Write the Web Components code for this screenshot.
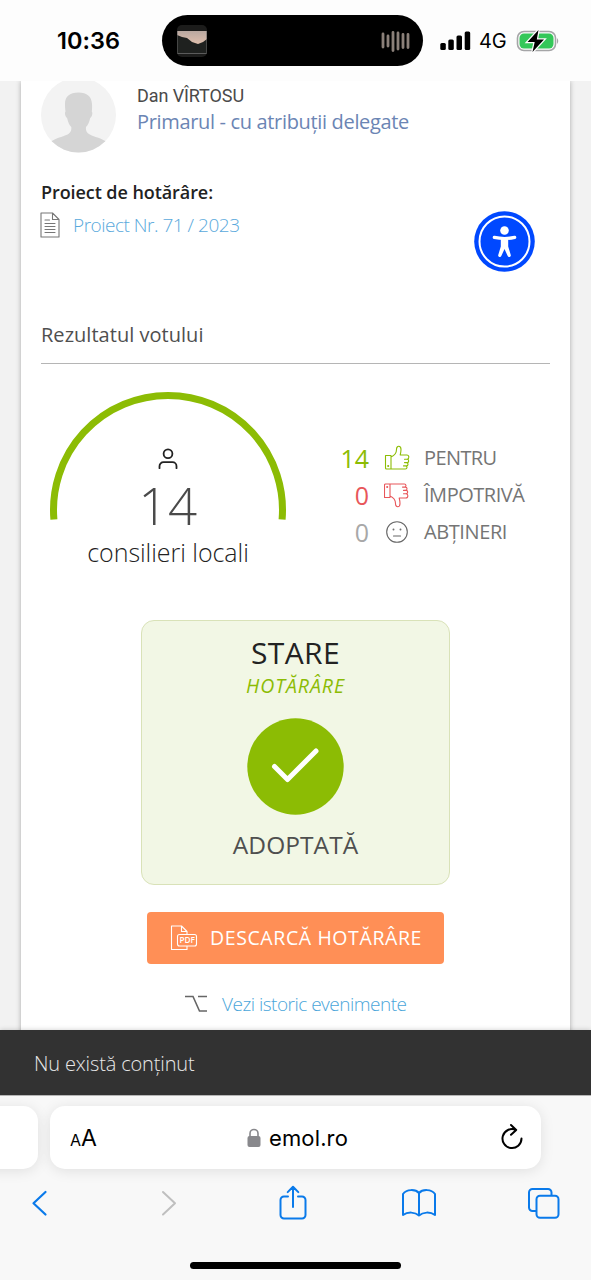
<!DOCTYPE html>
<html lang="ro">
<head>
<meta charset="UTF-8">
<title>emol.ro</title>
<style>
    html, body {
        margin: 0;
        padding: 0;
    }
    body {
        width: 591px;
        height: 1280px;
        overflow: hidden;
        display: flex;
        flex-direction: column;
        font-family: "Open Sans", "Noto Sans", sans-serif;
        background: #f8f8f8;
    }
</style>
</head>
<body>
<status-bar time="10:36" network="4G"></status-bar>
<page-view>
    <author-info name="Dan VÎRTOSU" role="Primarul - cu atribuții delegate"></author-info>
    <project-link label="Proiect de hotărâre:">Proiect Nr. 71 / 2023</project-link>
    <section-title>Rezultatul votului</section-title>
    <vote-result>
        <vote-gauge slot="gauge" count="14" label="consilieri locali"></vote-gauge>
        <vote-row type="up" count="14" width="72.5">PENTRU</vote-row>
        <vote-row type="down" count="0" width="100.5">ÎMPOTRIVĂ</vote-row>
        <vote-row type="neutral" count="0" width="83">ABȚINERI</vote-row>
    </vote-result>
    <state-card heading="STARE" kind="HOTĂRÂRE" state="ADOPTATĂ"></state-card>
    <download-button>DESCARCĂ HOTĂRÂRE</download-button>
    <history-link>Vezi istoric evenimente</history-link>
    <access-badge slot="overlay"></access-badge>
</page-view>
<snack-bar>Nu există conținut</snack-bar>
<browser-bar host="emol.ro"></browser-bar>

<script>
// one line of text, letter-spaced so that it takes the given width
class FitText extends HTMLElement {
    constructor() {
        super();
        this.attachShadow({ mode: 'open' });
        this.shadowRoot.innerHTML = `
            <style>
                :host { display: inline-block; white-space: nowrap; }
                span { display: inline-block; }
            </style>
            <span><slot></slot></span>
        `;
    }

    connectedCallback() {
        const width = parseFloat(this.getAttribute("width"));
        const span = this.shadowRoot.querySelector("span");
        const count = this.textContent.trim().length;
        if (!width || !count) return;
        const space = (width - span.getBoundingClientRect().width) / count;
        span.style.letterSpacing = space.toFixed(3) + "px";
    }
}

class StatusBar extends HTMLElement {
    constructor() {
        super();
        this.attachShadow({ mode: 'open' });
        this.shadowRoot.innerHTML = `
            <style>
                :host {
                    display: flex;
                    flex: none;
                    align-items: center;
                    box-sizing: border-box;
                    height: 81px;
                    padding-left: 57px;
                    background: #fdfdfd;
                    color: #000;
                    font-family: Inter, "Liberation Sans", sans-serif;
                }
                .time { width: 105px; font-size: 23.5px; font-weight: 600; }
                .island {
                    display: flex;
                    align-items: center;
                    justify-content: space-between;
                    box-sizing: border-box;
                    width: 261px;
                    height: 51px;
                    padding: 0 12px 0 14px;
                    border-radius: 26px;
                    background: #000;
                }
                .signal { margin-left: 17px; }
                .net { margin-left: 8px; width: 37px; font-size: 20px; }
                svg { display: block; }
            </style>
            <div class="time"><fit-text width="63">${this.getAttribute("time")}</fit-text></div>
            <div class="island">
                <svg width="32" height="34" viewBox="0 0 32 34">
                    <defs>
                        <clipPath id="c"><rect x="1" y="1" width="30" height="32" rx="5"/></clipPath>
                        <linearGradient id="g" x1="0" y1="0" x2="0" y2="1">
                            <stop offset="0" stop-color="#b9a8a0"/><stop offset="1" stop-color="#e2c0ad"/>
                        </linearGradient>
                    </defs>
                    <g clip-path="url(#c)">
                        <rect width="32" height="34" fill="#1c1c1b"/>
                        <rect x="1" y="7" width="30" height="14" fill="url(#g)"/>
                        <path d="M1 11l5 2 5 1 5 4 6 2 5-2 4-3v14H1z" fill="#1f211f"/>
                        <path d="M1 29.500h30" stroke="#777" stroke-width=".7"/>
                        <path d="M1.300 7v22M30.700 7v22" stroke="#666" stroke-width=".7"/>
                    </g>
                </svg>
                <svg width="32" height="22" viewBox="0 0 32 22" stroke="#8b8079" stroke-width="2.800" stroke-linecap="round">
                    <path d="M4 4v13M9 6v10M14 2.500v18M19 3v16M24 4.500v13M29 4.500v13"/>
                </svg>
            </div>
            <svg class="signal" width="31" height="20" viewBox="0 0 31 20">
                <rect x="0.300" y="12" width="5.500" height="7" rx="1.500"/>
                <rect x="8.300" y="8.500" width="5.500" height="10.500" rx="1.500"/>
                <rect x="16.500" y="4.500" width="5.500" height="14.500" rx="1.500"/>
                <rect x="24.700" y="0.500" width="5.500" height="18.500" rx="1.500"/>
            </svg>
            <div class="net"><fit-text width="27.5">${this.getAttribute("network")}</fit-text></div>
            <svg width="44" height="22" viewBox="0 0 44 22">
                <rect x="1.500" y="1.500" width="38" height="19" rx="6.500" fill="none" stroke="#a5a5a7" stroke-width="1.600"/>
                <rect x="3.500" y="3.500" width="34" height="15" rx="4.500" fill="#34c759"/>
                <path d="M41 8q2.500 3 0 6z" fill="#a5a5a7"/>
                <path d="M22.500 0L11.500 12h7.200L16.500 22 28 9.600h-7.200z" fill="#000" stroke="#fdfdfd" stroke-width="2.500" paint-order="stroke"/>
            </svg>
        `;
    }
}

class PageView extends HTMLElement {
    constructor() {
        super();
        this.attachShadow({ mode: 'open' });
        this.shadowRoot.innerHTML = `
            <style>
                :host {
                    display: block;
                    flex: none;
                    position: relative;
                    height: 949px;
                    overflow: hidden;
                    background: #f2f2f2;
                }
                .card {
                    display: flow-root;
                    box-sizing: border-box;
                    height: 960px;
                    margin: 0 21px;
                    padding: 0 20px;
                    background: #fff;
                    box-shadow: 0 0 5px rgba(0, 0, 0, .3);
                }
            </style>
            <div class="card"><slot></slot></div>
            <slot name="overlay"></slot>
        `;
    }
}

class AuthorInfo extends HTMLElement {
    constructor() {
        super();
        this.attachShadow({ mode: 'open' });
        this.shadowRoot.innerHTML = `
            <style>
                :host { display: flex; height: 76px; margin-top: -4px; }
                svg { flex: none; margin: 0 21px 0 -1px; }
                .text { padding-top: 6px; line-height: 26px; }
                .name { height: 26px; font-family: Roboto, sans-serif; font-size: 18px; color: #4a4a4a; }
                .role { height: 26px; font-size: 20px; color: #6b85b4; }
            </style>
            <svg width="76" height="76" viewBox="0 0 76 76">
                <clipPath id="a"><circle cx="38.500" cy="38" r="37.500"/></clipPath>
                <g clip-path="url(#a)">
                    <rect width="76" height="76" fill="#f3f3f3"/>
                    <path d="M38.500 15.500c-9 0-13.500 4-13.500 11.500 0 3 .2 5.500.5 7.500-1.200 1-.2 5.500 1.600 6.500 1 4.500 2.300 7 4.200 9 .5 5-2 7-7.500 9C16.500 61.500 10.500 63.500 4.500 70v10h68V70c-6-6.500-12-8.500-19.500-11-5.300-2-7.500-4-7-9 1.900-2 3.200-4.500 4.200-9 1.800-1 2.800-5.500 1.600-6.500.3-2 .4-4.500.2-7.500-.4-7.500-5-11.500-13.500-11.500z" fill="#d5d5d5"/>
                </g>
            </svg>
            <div class="text">
                <div class="name"><fit-text width="107">${this.getAttribute("name")}</fit-text></div>
                <div class="role"><fit-text width="272">${this.getAttribute("role")}</fit-text></div>
            </div>
        `;
    }
}

class ProjectLink extends HTMLElement {
    constructor() {
        super();
        this.attachShadow({ mode: 'open' });
        this.shadowRoot.innerHTML = `
            <style>
                :host { display: block; padding-top: 26px; }
                .label { height: 27px; line-height: 27px; font-size: 18px; font-weight: 600; color: #222; }
                .link {
                    display: flex;
                    align-items: center;
                    height: 38px;
                    font-size: 19px;
                    font-weight: 300;
                    color: #5aa9dc;
                }
                svg { margin: 0 13px 0 -1px; }
            </style>
            <div class="label"><fit-text width="172">${this.getAttribute("label")}</fit-text></div>
            <div class="link">
                <svg width="20" height="26" viewBox="0 0 20 26" fill="none" stroke="#777" stroke-width="1.100" stroke-linejoin="round" stroke-linecap="round">
                    <path d="M1 1h11.500L19 7.500v17.500H1zM12.500 1v6.500H19M5 8h4.500M5 11.500h10M5 14.500h10M5 17.500h10M5 20.500h10"/>
                </svg>
                <fit-text width="166.5">${this.textContent}</fit-text>
            </div>
        `;
    }
}

class AccessBadge extends HTMLElement {
    constructor() {
        super();
        this.attachShadow({ mode: 'open' });
        this.shadowRoot.innerHTML = `
            <style>
                :host { display: block; position: absolute; left: 474px; top: 130px; }
                svg { display: block; }
            </style>
            <svg width="61" height="61" viewBox="0 0 61 61">
                <circle cx="30.500" cy="30.500" r="30.300" fill="#0048ff"/>
                <circle cx="30.500" cy="30.500" r="25" fill="none" stroke="#fff" stroke-width="2"/>
                <circle cx="30.500" cy="19.500" r="4.300" fill="#fff"/>
                <path d="M20.300 26.400c7 1.500 13.400 1.500 20.400 0" stroke="#fff" stroke-width="3.200" stroke-linecap="round" fill="none"/>
                <path d="M26.800 27h7.400v8.500l2.500 8.300a1.600 1.600 0 0 1-3 1.200L30.500 38 27.300 45a1.600 1.600 0 0 1-3-1.200l2.500-8.300z" fill="#fff"/>
            </svg>
        `;
    }
}

class SectionTitle extends HTMLElement {
    constructor() {
        super();
        this.attachShadow({ mode: 'open' });
        this.shadowRoot.innerHTML = `
            <style>
                :host {
                    display: block;
                    box-sizing: border-box;
                    height: 120px;
                    padding-top: 77px;
                    line-height: 28px;
                    font-size: 20px;
                    color: #4f4f4f;
                    border-bottom: 1px solid #b5b5b5;
                }
            </style>
            <fit-text width="162.5">${this.textContent}</fit-text>
        `;
    }
}

class VoteResult extends HTMLElement {
    constructor() {
        super();
        this.attachShadow({ mode: 'open' });
        this.shadowRoot.innerHTML = `
            <style>
                :host { display: flex; height: 256px; }
                .rows { padding-top: 75px; }
            </style>
            <slot name="gauge"></slot>
            <div class="rows"><slot></slot></div>
        `;
    }
}

class VoteGauge extends HTMLElement {
    constructor() {
        super();
        this.attachShadow({ mode: 'open' });
        this.shadowRoot.innerHTML = `
            <style>
                :host { display: grid; width: 254px; padding-top: 27px; }
                .arc, .text { grid-area: 1 / 1; }
                .text {
                    display: flex;
                    flex-direction: column;
                    align-items: center;
                    padding-top: 57px;
                }
                .count { height: 58px; line-height: 58px; margin-top: 6px; font-size: 51px; font-weight: 300; color: #4a4a4a; }
                .label { height: 34px; line-height: 34px; margin-top: 1px; font-size: 25px; font-weight: 300; color: #222; }
            </style>
            <svg class="arc" width="254" height="130" viewBox="0 0 254 130">
                <path d="M12.900 128.500A114.500 114.500 0 1 1 241.100 128.500" fill="none" stroke="#8cbc04" stroke-width="7"/>
            </svg>
            <div class="text">
                <svg width="20" height="22" viewBox="0 0 20 22" fill="none" stroke="#222" stroke-width="1.800" stroke-linecap="round">
                    <circle cx="10" cy="5.700" r="4.400"/>
                    <path d="M1.500 20.200v-2a4 4 0 0 1 4-4h9a4 4 0 0 1 4 4v2"/>
                </svg>
                <div class="count"><fit-text width="59">${this.getAttribute("count")}</fit-text></div>
                <div class="label"><fit-text width="161.5">${this.getAttribute("label")}</fit-text></div>
            </div>
        `;
    }
}

const thumb = `
    <path d="M1.500 10.500h5.500v13.500H2.500a1 1 0 0 1-1-1zM7 12c3.500-1.500 5.500-4 5.500-7.500C12.500.2 17 .2 17 4.500c0 2-.3 3.500-.8 5.500h6.500c2.800 0 2.800 4 .3 4.200M20.500 14.200H23c2.300 0 2.300 3.400 0 3.400M20.500 17.600h1.800c2.300 0 2.300 3.300 0 3.300M19.500 20.900h2c2 0 2 3.100-.2 3.100H7"/>
    <circle cx="4.200" cy="21" r=".5"/>`;

const voteTypes = {
    up: { color: "#8cbc04", icon: thumb },
    down: { color: "#e8565a", icon: `<g transform="matrix(1 0 0 -1 -1 26)">${thumb}</g>` },
    neutral: {
        color: "#a8a8a8",
        stroke: "#666",
        icon: `<circle cx="13" cy="13" r="10.300"/><path d="M9.500 17h7"/><circle cx="9.500" cy="10.500" r=".4"/><circle cx="16.500" cy="10.500" r=".4"/>`
    }
};

class VoteRow extends HTMLElement {
    constructor() {
        super();
        this.attachShadow({ mode: 'open' });
        const type = voteTypes[this.getAttribute("type")];
        this.shadowRoot.innerHTML = `
            <style>
                :host { display: flex; align-items: center; height: 37px; }
                .count { width: 74px; text-align: right; font-size: 25px; color: ${type.color}; }
                svg { flex: none; margin: 0 14px 0 15px; }
                .label { font-size: 20px; color: #757575; }
            </style>
            <div class="count">${this.getAttribute("count")}</div>
            <svg width="26" height="26" viewBox="0 0 26 26" fill="none" stroke="${type.stroke || type.color}" stroke-width="1.100" stroke-linecap="round" stroke-linejoin="round">${type.icon}</svg>
            <div class="label"><fit-text width="${this.getAttribute("width")}">${this.textContent}</fit-text></div>
        `;
    }
}

class StateCard extends HTMLElement {
    constructor() {
        super();
        this.attachShadow({ mode: 'open' });
        this.shadowRoot.innerHTML = `
            <style>
                :host {
                    display: flex;
                    flex-direction: column;
                    align-items: center;
                    box-sizing: border-box;
                    width: 309px;
                    height: 265px;
                    margin: 0 auto;
                    padding-top: 12px;
                    border: 1px solid #d9e2b8;
                    border-radius: 13px;
                    background: #f2f7e5;
                }
                .heading { height: 40px; line-height: 40px; font-size: 30px; color: #222; }
                .kind { height: 25px; line-height: 25px; font-size: 19.500px; font-style: italic; color: #8cbc04; }
                svg { margin-top: 20px; }
                .state { height: 34px; line-height: 34px; margin-top: 13px; font-size: 24.500px; color: #4f4f4f; }
            </style>
            <div class="heading"><fit-text width="89">${this.getAttribute("heading")}</fit-text></div>
            <div class="kind"><fit-text width="99">${this.getAttribute("kind")}</fit-text></div>
            <svg width="97" height="97" viewBox="0 0 97 97">
                <circle cx="48.500" cy="48.500" r="48.200" fill="#8cbc04"/>
                <path d="M27.500 48.500L40.500 61.500 69 33" fill="none" stroke="#fff" stroke-width="5" stroke-linecap="round" stroke-linejoin="round"/>
            </svg>
            <div class="state"><fit-text width="125.5">${this.getAttribute("state")}</fit-text></div>
        `;
    }
}

class DownloadButton extends HTMLElement {
    constructor() {
        super();
        this.attachShadow({ mode: 'open' });
        this.shadowRoot.innerHTML = `
            <style>
                :host {
                    display: flex;
                    align-items: center;
                    box-sizing: border-box;
                    width: 297px;
                    height: 52px;
                    margin: 27px auto 0;
                    padding: 0 0 2px 23px;
                    border-radius: 4px;
                    background: #ff8f56;
                    color: #fff;
                    font-size: 19.500px;
                }
                svg { margin: 1px 12px 0 0; }
                text { font: 600 8.500px "Open Sans", sans-serif; }
            </style>
            <svg width="28" height="26" viewBox="0 0 28 26" fill="none" stroke="#fff" stroke-width="1.100" stroke-linejoin="round">
                <path d="M17 9V6.500L11.500 1H1.500v23.500H17V21M11.500 1v5.500H17"/>
                <rect x="7.500" y="9.500" width="19" height="11.500" rx="2"/>
                <text x="9.400" y="18.300" textLength="15.500" lengthAdjust="spacingAndGlyphs" fill="#fff" stroke="none">PDF</text>
            </svg>
            <fit-text width="212">${this.textContent}</fit-text>
        `;
    }
}

class HistoryLink extends HTMLElement {
    constructor() {
        super();
        this.attachShadow({ mode: 'open' });
        this.shadowRoot.innerHTML = `
            <style>
                :host {
                    display: flex;
                    align-items: center;
                    height: 30px;
                    margin-top: 25px;
                    padding-left: 143px;
                    font-size: 19px;
                    font-weight: 300;
                    color: #4aa6da;
                }
                svg { margin-right: 14px; }
            </style>
            <svg width="24" height="18" viewBox="0 0 24 18" fill="none" stroke="#666" stroke-width="1.600">
                <path d="M1 1.500h8l6.500 14.500H23M14 1.500h9"/>
            </svg>
            <fit-text width="184.5">${this.textContent}</fit-text>
        `;
    }
}

class SnackBar extends HTMLElement {
    constructor() {
        super();
        this.attachShadow({ mode: 'open' });
        this.shadowRoot.innerHTML = `
            <style>
                :host {
                    display: flex;
                    flex: none;
                    align-items: center;
                    box-sizing: border-box;
                    height: 65px;
                    padding: 2px 0 0 34px;
                    background: #323232;
                    color: #e8e8e8;
                    font-size: 20px;
                    font-weight: 300;
                    z-index: 1;
                    box-shadow: 0 0 5px rgba(0, 0, 0, .2);
                }
            </style>
            <fit-text width="160.5">${this.textContent}</fit-text>
        `;
    }
}

class BrowserBar extends HTMLElement {
    constructor() {
        super();
        this.attachShadow({ mode: 'open' });
        this.shadowRoot.innerHTML = `
            <style>
                :host {
                    display: flex;
                    flex-direction: column;
                    flex: 1;
                    box-sizing: border-box;
                    border-top: 1px solid #b5b5b5;
                    background: #f8f8f8;
                    color: #000;
                    font-family: Inter, "Liberation Sans", sans-serif;
                    overflow: hidden;
                    z-index: 1;
                }
                .tabs { display: flex; gap: 12px; margin: 10px 0 0 -20px; height: 63px; }
                .tab {
                    display: flex;
                    align-items: center;
                    box-sizing: border-box;
                    border-radius: 15px;
                    background: #fff;
                    box-shadow: 0 2px 14px rgba(0, 0, 0, .1);
                }
                .prev { width: 58px; }
                .active { width: 491px; padding: 0 17px 0 20px; }
                .aa { display: flex; align-items: baseline; width: 177px; font-size: 23px; }
                .aa small { font-size: 16px; }
                .host { width: 231px; margin-left: 8px; font-size: 22px; }
                .reload { margin-top: -2px; }
                .tools { display: flex; align-items: center; height: 68px; padding-left: 31px; }
                .tools svg { flex: none; }
                .home { width: 211px; height: 7px; margin: 25px 0 0 190px; border-radius: 4px; background: #000; }
            </style>
            <div class="tabs">
                <div class="tab prev"></div>
                <div class="tab active">
                    <div class="aa"><small>A</small><span>A</span></div>
                    <svg width="14" height="20" viewBox="0 0 14 20">
                        <rect x=".5" y="8" width="13" height="11" rx="2" fill="#88888c"/>
                        <path d="M3 9V5.500a4 4 0 0 1 8 0V9" fill="none" stroke="#88888c" stroke-width="1.600"/>
                    </svg>
                    <div class="host"><fit-text width="79">${this.getAttribute("host")}</fit-text></div>
                    <svg class="reload" width="24" height="28" viewBox="0 0 24 28" fill="none" stroke="#000" stroke-width="2" stroke-linecap="round" stroke-linejoin="round">
                        <path d="M15.800 6.900A9.500 9.500 0 1 0 21.500 15.600M11 2l5.200 4.900-5.200 4.800"/>
                    </svg>
                </div>
            </div>
            <div class="tools">
                <svg width="17" height="28" viewBox="0 0 17 28" fill="none" stroke="#0a7aea" stroke-width="2.200" stroke-linecap="round" stroke-linejoin="round">
                    <path d="M14.500 3L2.500 14.300l12 11.200"/>
                </svg>
                <svg style="margin-left: 113px" width="17" height="28" viewBox="0 0 17 28" fill="none" stroke="#bfbfbf" stroke-width="2" stroke-linecap="round" stroke-linejoin="round">
                    <path d="M2 3l12 11.300L2 25.500"/>
                </svg>
                <svg style="margin-left: 100px" width="30" height="36" viewBox="0 0 30 36" fill="none" stroke="#0a7aea" stroke-width="2" stroke-linecap="round" stroke-linejoin="round">
                    <path d="M10 11.500H6a3.500 3.500 0 0 0-3.500 3.500v15A3.500 3.500 0 0 0 6 33.500h18a3.500 3.500 0 0 0 3.500-3.500v-15a3.500 3.500 0 0 0-3.500-3.500h-4M15 22V2M9.700 7.100L15 1.800l5.300 5.300"/>
                </svg>
                <svg style="margin-left: 92.5px" width="36" height="30" viewBox="0 0 36 30" fill="none" stroke="#0a7aea" stroke-width="2" stroke-linejoin="round">
                    <path d="M18 5v22.500C14 24 7 23.500 2 27V6C5.500 1 14.500 1 18 5c3.500-4 12.500-4 16 1v21c-5-3.500-12-3-16 .5"/>
                </svg>
                <svg style="margin-left: 90.5px" width="34" height="33" viewBox="0 0 34 33" fill="none" stroke="#0a7aea" stroke-width="2">
                    <path d="M9.500 24H5.500A3.500 3.500 0 0 1 2 20.500V5.500A3.500 3.500 0 0 1 5.500 2H21a3.500 3.500 0 0 1 3.500 3.500V8.800"/>
                    <rect x="9.500" y="8.800" width="22" height="22" rx="3.500"/>
                </svg>
            </div>
            <div class="home"></div>
        `;
    }
}

window.customElements.define("fit-text", FitText);
window.customElements.define("status-bar", StatusBar);
window.customElements.define("page-view", PageView);
window.customElements.define("author-info", AuthorInfo);
window.customElements.define("project-link", ProjectLink);
window.customElements.define("access-badge", AccessBadge);
window.customElements.define("section-title", SectionTitle);
window.customElements.define("vote-result", VoteResult);
window.customElements.define("vote-gauge", VoteGauge);
window.customElements.define("vote-row", VoteRow);
window.customElements.define("state-card", StateCard);
window.customElements.define("download-button", DownloadButton);
window.customElements.define("history-link", HistoryLink);
window.customElements.define("snack-bar", SnackBar);
window.customElements.define("browser-bar", BrowserBar);
</script>
</body>
</html>
